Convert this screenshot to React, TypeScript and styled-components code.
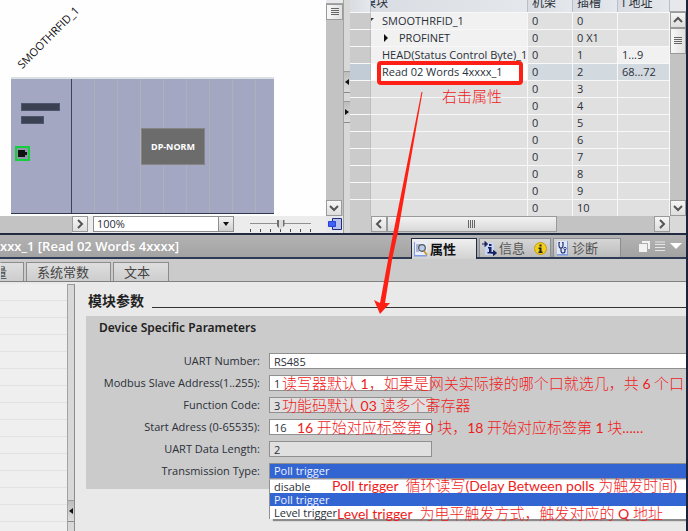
import React from "react";
import styled, { createGlobalStyle, css } from "styled-components";

const UI = `"Open Sans", "Noto Sans CJK SC", sans-serif`;
const HEAD = `"Noto Sans", "Noto Sans CJK SC", sans-serif`;
const NOTE = `"Noto Sans CJK SC", sans-serif`;
const NAVY = "#232b42";

const Global = createGlobalStyle`
  *, *::before, *::after { box-sizing: border-box; }
  body { margin: 0; background: #e8e8e8; font-family: ${UI}; font-size: 11px; line-height: 16px; color: #2a2f38; }
  button, input, select { font: inherit; color: inherit; margin: 0; padding: 0; border-radius: 0; }
  h1, h2, h3, ul { margin: 0; padding: 0; font-weight: inherit; font-size: inherit; }
`;

const Page = styled.main`
  position: relative;
  min-height: 100vh;
  display: flex;
  flex-direction: column;
  overflow: hidden;
  border-right: 2px solid #1c2238;
`;

/* ---------- upper work area ---------- */
const WorkArea = styled.section`
  display: grid;
  grid-template-columns: minmax(0, 343fr) 7px minmax(0, 336fr);
  border-bottom: 2px solid ${NAVY};
`;

const DevicePane = styled.div`
  display: grid;
  grid-template-columns: minmax(0, 1fr) 17px;
  grid-template-rows: 1fr 17px;
`;

const Canvas = styled.div`
  position: relative;
  overflow: hidden;
  background: #fefefe;
`;

const DeviceName = styled.span`
  position: absolute;
  left: 25px;
  top: 56px;
  font-size: 11px;
  color: #111;
  transform: rotate(-45deg);
  transform-origin: 0 100%;
`;

const Rack = styled.div`
  position: absolute;
  left: 11px;
  top: 77px;
  width: 263px;
  height: 137px;
  display: grid;
  grid-template-columns: 61px 1fr;
  border-top: 2px solid #dcdfe4;
  border-bottom: 1px solid #2f3850;
  background: #a3a7c2;
`;

const RackHead = styled.div`
  display: flex;
  flex-direction: column;
  gap: 5px;
  padding: 24px 0 0 10px;
  border-right: 1px solid #39435c;
`;

const Bar = styled.span<{ $short?: boolean }>`
  width: ${(p) => (p.$short ? 23 : 39)}px;
  height: 8px;
  background: #394152;
  border: 1px solid #4c566c;
`;

const Port = styled.button`
  width: 15px;
  height: 15px;
  margin: 17px 0 0 -6px;
  border: 2px solid #12cf3c;
  background: #8f96a8;
  display: grid;
  place-items: center;
`;

const Slots = styled.div`
  background: repeating-linear-gradient(90deg, transparent 0 22px, #aeb1ba 22px 23px);
  padding: 49px 69px 0;
`;

const Module = styled.button`
  display: block;
  width: 64px;
  height: 37px;
  border: 1px solid #858585;
  background: #6c6c6c;
  color: #fff;
  font-family: ${HEAD};
  font-size: 9px;
  font-weight: 700;
`;

const ZoomBar = styled.div`
  display: flex;
  align-items: stretch;
  background: #ececec;
`;

const HTrack = styled.div`
  flex: 1 1 72px;
  max-width: 72px;
  background: #c3c3c3;
`;

const ScrollButton = styled.button`
  flex: none;
  width: 16px;
  height: 16px;
  border: 1px solid #9a9a9a;
  background: linear-gradient(#f6f6f6, #dedede);
  display: grid;
  place-items: center;
`;

const Combo = styled.div`
  display: flex;
  margin: 0 16px 0 5px;
  width: 141px;
  height: 16px;
  border: 1px solid #8e8e8e;
  background: #fff;
`;

const ComboInput = styled.input`
  flex: 1;
  min-width: 0;
  border: 0;
  padding-left: 3px;
  background: none;
  line-height: 14px;
`;

const ComboButton = styled.button`
  width: 15px;
  border: 0;
  border-left: 1px solid #8e8e8e;
  background: linear-gradient(#f4f4f4, #cfcfcf);
  display: grid;
  place-items: center;
`;

const ZoomSlider = styled.input`
  appearance: none;
  width: 61px;
  height: 17px;
  background:
    repeating-linear-gradient(90deg, #4a4a4a 0 1px, transparent 1px 10px) 0 13px / 61px 3px no-repeat,
    linear-gradient(#909090, #909090) 0 7px / 100% 1px no-repeat;
  &::-webkit-slider-thumb {
    appearance: none;
    width: 8px;
    height: 10px;
    background: linear-gradient(90deg, #707070 0 2px, #dcdcdc 2px 6px, #707070 6px);
    clip-path: polygon(0 0, 100% 0, 100% 60%, 50% 100%, 0 60%);
  }
`;

const OverviewButton = styled.button`
  border: 0;
  background: #e6e8ee;
  display: grid;
  place-items: center;
`;

const VScroll = styled.div`
  display: flex;
  flex-direction: column;
  align-items: stretch;
  background: #c3c3c3;
`;

const Thumb = styled.div<{ $size: number }>`
  height: ${(p) => p.$size}px;
  border: 1px solid #9a9a9a;
  background: linear-gradient(90deg, #f8f8f8, #e0e0e0);
  display: grid;
  place-items: center;
`;

const Stub = styled.div<{ $size: number }>`
  height: ${(p) => p.$size}px;
  background: #e6e8ec;
  border-bottom: 1px solid #a4a4a4;
`;

const Spring = styled.div`
  flex: 1;
`;

const Splitter = styled.div<{ $top: number }>`
  display: flex;
  flex-direction: column;
  gap: 8px;
  padding-top: ${(p) => p.$top}px;
  border-left: 1px solid #a2a2a2;
  background: #d8d8d8;
`;

const SplitHandle = styled.button`
  height: 22px;
  border: 0;
  border-top: 1px solid #9b9b9b;
  border-bottom: 1px solid #8a8a8a;
  background: linear-gradient(#bdbdbd, #dcdcdc);
  display: grid;
  place-items: center;
`;

/* ---------- device overview table ---------- */
const TablePane = styled.div`
  display: grid;
  grid-template-columns: minmax(0, 1fr) 16px;
  grid-template-rows: auto 17px;
`;

const Overview = styled.table`
  width: 100%;
  table-layout: fixed;
  border-collapse: separate;
  border-spacing: 0;
`;

const Th = styled.th<{ $w?: number; $cut?: boolean }>`
  width: ${(p) => (p.$w ? `${p.$w}px` : "auto")};
  height: 12px;
  padding: 0 0 6px ${(p) => (p.$cut ? 0 : 4)}px;
  text-indent: ${(p) => (p.$cut ? "-7px" : "0")};
  overflow: hidden;
  background: linear-gradient(90deg, #d9dde3, #e4e7eb);
  border-right: 1px solid #b9bfc8;
  font-weight: 400;
  font-size: 12px;
  line-height: 6px;
  text-align: left;
  white-space: nowrap;
`;

type Tone = "plain" | "light" | "picked" | "edit";
const tones: Record<Tone, string> = { plain: "#e0e0e0", light: "#f1f1f1", picked: "#d2d9df", edit: "#ffffff" };

const Td = styled.td<{ $tone: Tone }>`
  position: relative;
  height: 17px;
  padding: 0 0 0 4px;
  background: ${(p) => tones[p.$tone]};
  border-top: 1px solid #f8f8f8;
  border-right: 1px solid #f8f8f8;
  line-height: 16px;
  white-space: nowrap;
`;

const NameTd = styled(Td)<{ $nested?: boolean }>`
  padding-left: ${(p) => (p.$nested ? 13 : 11)}px;
`;

const Gutter = styled(Td)<{ $on?: boolean }>`
  background: ${(p) => (p.$on ? "#c1ccd7" : "#cbcbcb")};
  border-right-color: #bdbdbd;
`;

const Expander = styled.button`
  border: 0;
  background: none;
  width: 15px;
  text-align: left;
`;

const OpenMark = styled.span`
  position: absolute;
  left: 0;
  top: 5px;
  width: 3px;
  height: 3px;
  background: #333;
  clip-path: polygon(0 0, 100% 0, 0 100%);
`;

const Highlight = styled.span`
  position: absolute;
  inset: -3px 4px -5px 6px;
  border: 4px solid #ff2015;
  border-radius: 4px;
  z-index: 1;
`;

const HScroll = styled.div`
  display: grid;
  grid-template-columns: 21px 16px minmax(0, 170fr) minmax(0, 97fr) 16px;
  background: #c3c3c3;
`;

const GutterEnd = styled.div`
  background: #cbcbcb;
`;

const HThumb = styled.div`
  height: 16px;
  border: 1px solid #9a9a9a;
  background: linear-gradient(#f2f2f2, #d8d8d8);
  display: grid;
  place-items: center;
`;

const Corner = styled.div`
  background: #d9d9d9;
`;

/* ---------- red remarks ---------- */
const Note = styled.span<{ $x: number; $y?: number }>`
  position: absolute;
  left: ${(p) => p.$x}px;
  top: ${(p) => p.$y ?? 0}px;
  z-index: 3;
  font-family: ${NOTE};
  font-size: 15px;
  font-weight: 300;
  line-height: 16px;
  color: #ee1c1c;
  white-space: pre;
  pointer-events: none;
`;

const Latin = styled.span`
  font-family: Lato, sans-serif;
  font-weight: 400;
  font-size: 14px;
`;

const Arrow = styled.svg`
  position: absolute;
  left: 370px;
  top: 88px;
  z-index: 4;
  pointer-events: none;
`;

/* ---------- inspector ---------- */
const Inspector = styled.section`
  flex: 1;
  display: flex;
  flex-direction: column;
`;

const TitleBar = styled.header`
  display: flex;
  align-items: flex-end;
  height: 24px;
  background: linear-gradient(#b3b3b3, #a3a3a3);
  border-bottom: 2px solid #2f3a54;
`;

const Title = styled.h1`
  flex: 1;
  min-width: 0;
  overflow: hidden;
  white-space: nowrap;
  font-size: 13px;
  font-weight: 600;
  line-height: 22px;
  color: #fff;
`;

const MainTabs = styled.div`
  display: flex;
  gap: 2px;
`;

const MainTab = styled.button<{ $w: number; $active?: boolean }>`
  display: flex;
  align-items: center;
  gap: 2px;
  width: ${(p) => p.$w}px;
  height: 19px;
  padding: 0 3px 0 2px;
  border: 1px solid #8a8d94;
  border-bottom: 0;
  background: linear-gradient(#d6d6d6, #bcbcbc);
  font-size: 13px;
  line-height: 18px;
  color: #555;
  white-space: nowrap;
  ${(p) =>
    p.$active &&
    css`
      height: 21px;
      margin-bottom: -2px;
      border-color: ${NAVY};
      background: linear-gradient(#f0f0f0, #d2d2d2);
      color: #111;
      font-weight: 700;
    `}
`;

const TabText = styled.span`
  flex: 1;
  text-align: left;
`;

const WindowTools = styled.div`
  display: flex;
  align-items: center;
  gap: 5px;
  height: 22px;
  padding: 0 4px 0 18px;
`;

const ToolButton = styled.button`
  border: 0;
  background: none;
  display: grid;
`;

const SubTabs = styled.nav`
  display: flex;
  align-items: flex-end;
  gap: 2px;
  height: 23px;
  background: #cbcbcb;
  border-bottom: 1px solid #808080;
`;

const SubTab = styled.button<{ $w: number; $cut?: boolean }>`
  width: ${(p) => p.$w}px;
  height: 19px;
  padding-left: ${(p) => (p.$cut ? 0 : 10)}px;
  text-indent: ${(p) => (p.$cut ? "-7px" : "0")};
  overflow: hidden;
  border: 1px solid #8c8c8c;
  border-bottom: 0;
  border-left-color: ${(p) => (p.$cut ? "transparent" : "#8c8c8c")};
  background: linear-gradient(#dedede, #cdcdcd);
  font-size: 13px;
  line-height: 17px;
  text-align: left;
  color: #444;
`;

const Body = styled.div`
  flex: 1;
  display: grid;
  grid-template-columns: 67px 8px minmax(0, 1fr);
  padding-top: 2px;
  background: #e9e9e9;
`;

const SideNav = styled.aside`
  background: repeating-linear-gradient(#efefef 0 16px, #e2e2e2 16px 17px);
`;

const SideSplitter = styled(Splitter)`
  border-top: 1px solid #9b9b9b;
  border-right: 1px solid #8c8c8c;
`;

const Content = styled.div`
  padding: 9px 0 0 11px;
`;

const SectionTitle = styled.h2`
  display: flex;
  gap: 8px;
  padding-left: 2px;
  font-size: 14px;
  font-weight: 700;
  line-height: 16px;
  color: #222;
  &::after {
    content: "";
    flex: 1;
    height: 15px;
    border-bottom: 1px solid #333;
  }
`;

const Panel = styled.section`
  margin-top: 7px;
  padding: 4px 0 10px;
  background: #cbcbcb;
`;

const PanelTitle = styled.h3`
  padding-left: 13px;
  margin-bottom: 17px;
  font-family: ${HEAD};
  font-size: 12px;
  font-weight: 600;
  line-height: 16px;
  color: #222;
`;

const Form = styled.form`
  display: grid;
  row-gap: 6px;
`;

const Field = styled.div`
  position: relative;
  display: grid;
  grid-template-columns: 174px minmax(0, 1fr);
  column-gap: 9px;
`;

const Label = styled.label`
  text-align: right;
  white-space: nowrap;
  line-height: 16px;
`;

const Value = styled.input<{ $wide?: boolean }>`
  width: ${(p) => (p.$wide ? "100%" : "163px")};
  height: 16px;
  padding-left: 4px;
  border: 1px solid #909090;
  border-right-width: ${(p) => (p.$wide ? 0 : 1)}px;
  background: ${(p) => (p.readOnly ? "#e0e0e0" : "#fff")};
  line-height: 14px;
`;

const Choice = styled.select`
  appearance: none;
  width: 100%;
  height: 16px;
  padding-left: 4px;
  border: 1px solid #909090;
  border-right: 0;
  background: #3264d2;
  color: #eef2ff;
  line-height: 14px;
`;

const Options = styled.ul`
  position: absolute;
  left: 183px;
  right: -2px;
  top: 16px;
  z-index: 2;
  list-style: none;
  border-left: 1px solid #909090;
  border-top: 1px solid #c8ccd8;
  background: #fff;
  box-shadow: 4px 2px 1px #8b8b8b;
`;

const Option = styled.li<{ $on?: boolean }>`
  position: relative;
  height: 13px;
  padding-left: 4px;
  line-height: 13px;
  background: ${(p) => (p.$on ? "#3264d2" : "#fff")};
  color: ${(p) => (p.$on ? "#eef2ff" : "#2a2f38")};
`;

/* ---------- small drawings ---------- */
const chevrons = {
  up: "M2 8 6 4 10 8",
  down: "M2 4 6 8 10 4",
  left: "M8 2 4 6 8 10",
  right: "M4 2 8 6 4 10",
};
const Chevron = ({ to }: { to: keyof typeof chevrons }) => (
  <svg width="12" height="12" viewBox="0 0 12 12" fill="none" stroke="#555" strokeWidth="2">
    <path d={chevrons[to]} />
  </svg>
);

const Triangle = ({ d, w = 8, h = 8 }: { d: string; w?: number; h?: number }) => (
  <svg width={w} height={h} viewBox={`0 0 ${w} ${h}`} fill="#111">
    <path d={d} />
  </svg>
);

const Grip = ({ upright }: { upright?: boolean }) => (
  <svg width="8" height="8" viewBox="0 0 8 8" stroke="#666" strokeWidth="1">
    <path d={upright ? "M.5 0V8M2.5 0V8M4.5 0V8M6.5 0V8" : "M0 .5H8M0 2.5H8M0 4.5H8M0 6.5H8"} />
  </svg>
);

const OverviewIcon = () => (
  <svg width="14" height="13" viewBox="0 0 14 13">
    <path d="M4.5.5h9v11h-9z" fill="#b6c2ea" stroke="#1d2b78" />
    <path d="M.5 3.5h7v5h-7z" fill="#3f63f0" stroke="#2443d6" />
  </svg>
);

const PropertiesIcon = () => (
  <svg width="14" height="15" viewBox="0 0 14 15">
    <path d="M0 0h13v14H0z" fill="#e9eefb" />
    <path d="M0 13h13v1.500H0zM0 0h1v14H0z" fill="#7d9be6" />
    <path d="M2 3h4M2 5h3M2 7h2M2 9h3" stroke="#6d7fb0" />
    <circle cx="8" cy="6" r="3.300" fill="#b9cdea" stroke="#555" strokeWidth="1.200" />
    <path d="M10 9l3 4" stroke="#c89a3a" strokeWidth="2" />
  </svg>
);

const InfoIcon = () => (
  <svg width="15" height="15" viewBox="0 0 15 15">
    <path d="M3 2h9v12H3z" fill="#c9d6f6" />
    <path d="M0 3h4M3 0.500 5.500 3 3 5.500zM9 12h4M11.500 9.500 14.500 12 11.500 14.500z" fill="#16205e" stroke="#16205e" />
    <path d="M7 3h2.500v2H7zM6 6h3.500v5H11v1.500H5.500V11H7V7.500H6z" fill="#16205e" />
  </svg>
);

const BadgeIcon = () => (
  <svg width="13" height="13" viewBox="0 0 13 13">
    <circle cx="6.500" cy="6.500" r="6" fill="#f3cf1d" stroke="#c59c10" />
    <path d="M5.500 2.500h2v2h-2zM4.500 5.500h3v4h1V11h-4V9.500h1V7h-1z" fill="#222" />
  </svg>
);

const DiagnosticsIcon = () => (
  <svg width="14" height="15" viewBox="0 0 14 15">
    <path d="M1 0h11v14H1z" fill="#dfe8fb" />
    <path d="M1 13h11v1.500H1zM11 0h1v14h-1z" fill="#7d9be6" />
    <path d="M4 1.500H3v3Q3 7 5 7t2-2.500v-3H6M5 7v2.500Q5 12 7 12t2-2V9" fill="none" stroke="#2a3470" strokeWidth="1.200" />
    <circle cx="9" cy="7.500" r="1.200" fill="#fff" stroke="#2a3470" />
  </svg>
);

/* ---------- data ---------- */
type Row = { name?: string; nested?: boolean; slot: string; addr?: string; picked?: boolean };
const rows: Row[] = [
  { name: "SMOOTHRFID_1", slot: "0" },
  { name: "PROFINET", nested: true, slot: "0 X1" },
  { name: "HEAD(Status Control Byte)_1", slot: "1", addr: "1...9" },
  { name: "Read 02 Words 4xxxx_1", slot: "2", addr: "68...72", picked: true },
  ...["3", "4", "5", "6", "7", "8", "9", "10"].map((slot) => ({ slot })),
];

const COMMA = "\uFF0C";
const noop = () => {};

export default function App() {
  return (
    <>
      <Global />
      <Page>
        <WorkArea>
          <DevicePane>
            <Canvas>
              <DeviceName>SMOOTHRFID_1</DeviceName>
              <Rack>
                <RackHead>
                  <Bar />
                  <Bar $short />
                  <Port type="button" aria-label="Port">
                    <Triangle w={9} h={7} d="M0 0H7V2H9V5H7V7H0z" />
                  </Port>
                </RackHead>
                <Slots>
                  <Module type="button">DP-NORM</Module>
                </Slots>
              </Rack>
            </Canvas>
            <VScroll>
              <Stub $size={4} />
              <Thumb $size={16}><Grip /></Thumb>
              <Spring />
              <ScrollButton type="button" aria-label="Scroll down"><Chevron to="down" /></ScrollButton>
            </VScroll>
            <ZoomBar>
              <HTrack />
              <ScrollButton type="button" aria-label="Scroll right"><Chevron to="right" /></ScrollButton>
              <Combo>
                <ComboInput aria-label="Zoom" value="100%" onChange={noop} />
                <ComboButton type="button" aria-label="Zoom levels"><Triangle h={5} d="M1 0H7L4 4z" /></ComboButton>
              </Combo>
              <ZoomSlider type="range" aria-label="Zoom slider" defaultValue={50} />
            </ZoomBar>
            <OverviewButton type="button" aria-label="Overview"><OverviewIcon /></OverviewButton>
          </DevicePane>

          <Splitter $top={71}>
            <SplitHandle type="button" aria-label="Collapse left"><Triangle w={4} h={6} d="M4 0V6L0 3z" /></SplitHandle>
            <SplitHandle type="button" aria-label="Collapse right"><Triangle w={4} h={6} d="M0 0V6L4 3z" /></SplitHandle>
          </Splitter>

          <TablePane>
            <Overview>
              <thead>
                <tr>
                  <Th $w={21} />
                  <Th $cut>模块</Th>
                  <Th $w={45}>机架</Th>
                  <Th $w={45}>插槽</Th>
                  <Th $w={52}>I 地址</Th>
                </tr>
              </thead>
              <tbody>
                {rows.map((r) => {
                  const base: Tone = r.picked ? "picked" : "plain";
                  return (
                    <tr key={r.slot}>
                      <Gutter $tone="plain" $on={r.picked} />
                      <NameTd $tone={r.picked ? "edit" : r.name ? "light" : "plain"} $nested={r.nested}>
                        {r.slot === "0" && <OpenMark />}
                        {r.nested && (
                          <Expander type="button" aria-label="Expand"><Triangle w={4} h={8} d="M0 0V8L4 4z" /></Expander>
                        )}
                        {r.name}
                        {r.picked && <Highlight />}
                        {r.slot === "3" && <Note $x={71} $y={7}>右击属性</Note>}
                      </NameTd>
                      <Td $tone={base}>0</Td>
                      <Td $tone={base}>{r.slot}</Td>
                      <Td $tone={r.addr && !r.picked ? "light" : base}>{r.addr}</Td>
                    </tr>
                  );
                })}
              </tbody>
            </Overview>
            <VScroll>
              <Stub $size={12} />
              <ScrollButton type="button" aria-label="Scroll up"><Chevron to="up" /></ScrollButton>
              <Thumb $size={26}><Grip /></Thumb>
              <Spring />
              <ScrollButton type="button" aria-label="Scroll down"><Chevron to="down" /></ScrollButton>
            </VScroll>
            <HScroll>
              <GutterEnd />
              <ScrollButton type="button" aria-label="Scroll left"><Chevron to="left" /></ScrollButton>
              <HThumb><Grip upright /></HThumb>
              <span />
              <ScrollButton type="button" aria-label="Scroll right"><Chevron to="right" /></ScrollButton>
            </HScroll>
            <Corner />
          </TablePane>
        </WorkArea>

        <Inspector>
          <TitleBar>
            <Title>xxx_1 [Read 02 Words 4xxxx]</Title>
            <MainTabs>
              <MainTab type="button" $w={66} $active><PropertiesIcon /><TabText>属性</TabText></MainTab>
              <MainTab type="button" $w={72}><InfoIcon /><TabText>信息</TabText><BadgeIcon /></MainTab>
              <MainTab type="button" $w={68}><DiagnosticsIcon /><TabText>诊断</TabText></MainTab>
            </MainTabs>
            <WindowTools>
              <ToolButton type="button" aria-label="Float">
                <svg width="11" height="11" viewBox="0 0 11 11"><path d="M3 0h8v8H9V2H3zM0 3h8v8H0z" fill="#f2f2f2" /></svg>
              </ToolButton>
              <ToolButton type="button" aria-label="Lines">
                <svg width="10" height="10" viewBox="0 0 10 10" stroke="#e6e6e6"><path d="M0 1H10M0 3.500H10M0 6.500H10M0 9.500H10" /></svg>
              </ToolButton>
              <ToolButton type="button" aria-label="Collapse">
                <svg width="12" height="6" viewBox="0 0 12 6" fill="#fff"><path d="M0 0H12L6 6z" /></svg>
              </ToolButton>
            </WindowTools>
          </TitleBar>
          <SubTabs>
            <SubTab type="button" $w={24} $cut>量</SubTab>
            <SubTab type="button" $w={85}>系统常数</SubTab>
            <SubTab type="button" $w={56}>文本</SubTab>
          </SubTabs>

          <Body>
            <SideNav />
            <SideSplitter $top={215}>
              <SplitHandle type="button" aria-label="Collapse navigation"><Triangle w={4} h={6} d="M4 0V6L0 3z" /></SplitHandle>
            </SideSplitter>
            <Content>
              <SectionTitle>模块参数</SectionTitle>
              <Panel>
                <PanelTitle>Device Specific Parameters</PanelTitle>
                <Form>
                  <Field>
                    <Label htmlFor="uart">UART Number:</Label>
                    <Value id="uart" $wide value="RS485" onChange={noop} />
                  </Field>
                  <Field>
                    <Label htmlFor="slave">Modbus Slave Address(1..255):</Label>
                    <Value id="slave" value="1" onChange={noop} />
                    <Note $x={196}>读写器默认<Latin> 1</Latin>{COMMA}如果是网关实际接的哪个口就选几{COMMA}共<Latin> 6 </Latin>个口</Note>
                  </Field>
                  <Field>
                    <Label htmlFor="func">Function Code:</Label>
                    <Value id="func" value="3" readOnly />
                    <Note $x={196}>功能码默认<Latin> 03 </Latin>读多个寄存器</Note>
                  </Field>
                  <Field>
                    <Label htmlFor="start">Start Adress (0-65535):</Label>
                    <Value id="start" value="16" onChange={noop} />
                    <Note $x={211}><Latin>16 </Latin>开始对应标签第<Latin> 0 </Latin>块{COMMA}<Latin>18 </Latin>开始对应标签第<Latin> 1 </Latin>块<Latin>……</Latin></Note>
                  </Field>
                  <Field>
                    <Label htmlFor="len">UART Data Length:</Label>
                    <Value id="len" value="2" readOnly />
                  </Field>
                  <Field>
                    <Label htmlFor="trans">Transmission Type:</Label>
                    <Choice id="trans" value="poll" onChange={noop}>
                      <option value="disable">disable</option>
                      <option value="poll">Poll trigger</option>
                      <option value="level">Level trigger</option>
                    </Choice>
                    <Options>
                      <Option>
                        disable
                        <Note $x={62} $y={-3}><Latin>Poll trigger  </Latin>循环读写<Latin>(Delay Between polls </Latin>为触发时间<Latin>)</Latin></Note>
                      </Option>
                      <Option $on>Poll trigger</Option>
                      <Option>
                        Level trigger
                        <Note $x={67} $y={-1}><Latin>Level trigger  </Latin>为电平触发方式{COMMA}触发对应的<Latin> Q </Latin>地址</Note>
                      </Option>
                    </Options>
                  </Field>
                </Form>
              </Panel>
            </Content>
          </Body>
        </Inspector>

        <Arrow width="56" height="230" viewBox="0 0 56 230" fill="#ff2015">
          <path d="M51.500 4 52.500 4 28 144 22 172 15 215 20 215 10 226 4 212 10 215 18 172 23.500 144z" />
        </Arrow>
      </Page>
    </>
  );
}
